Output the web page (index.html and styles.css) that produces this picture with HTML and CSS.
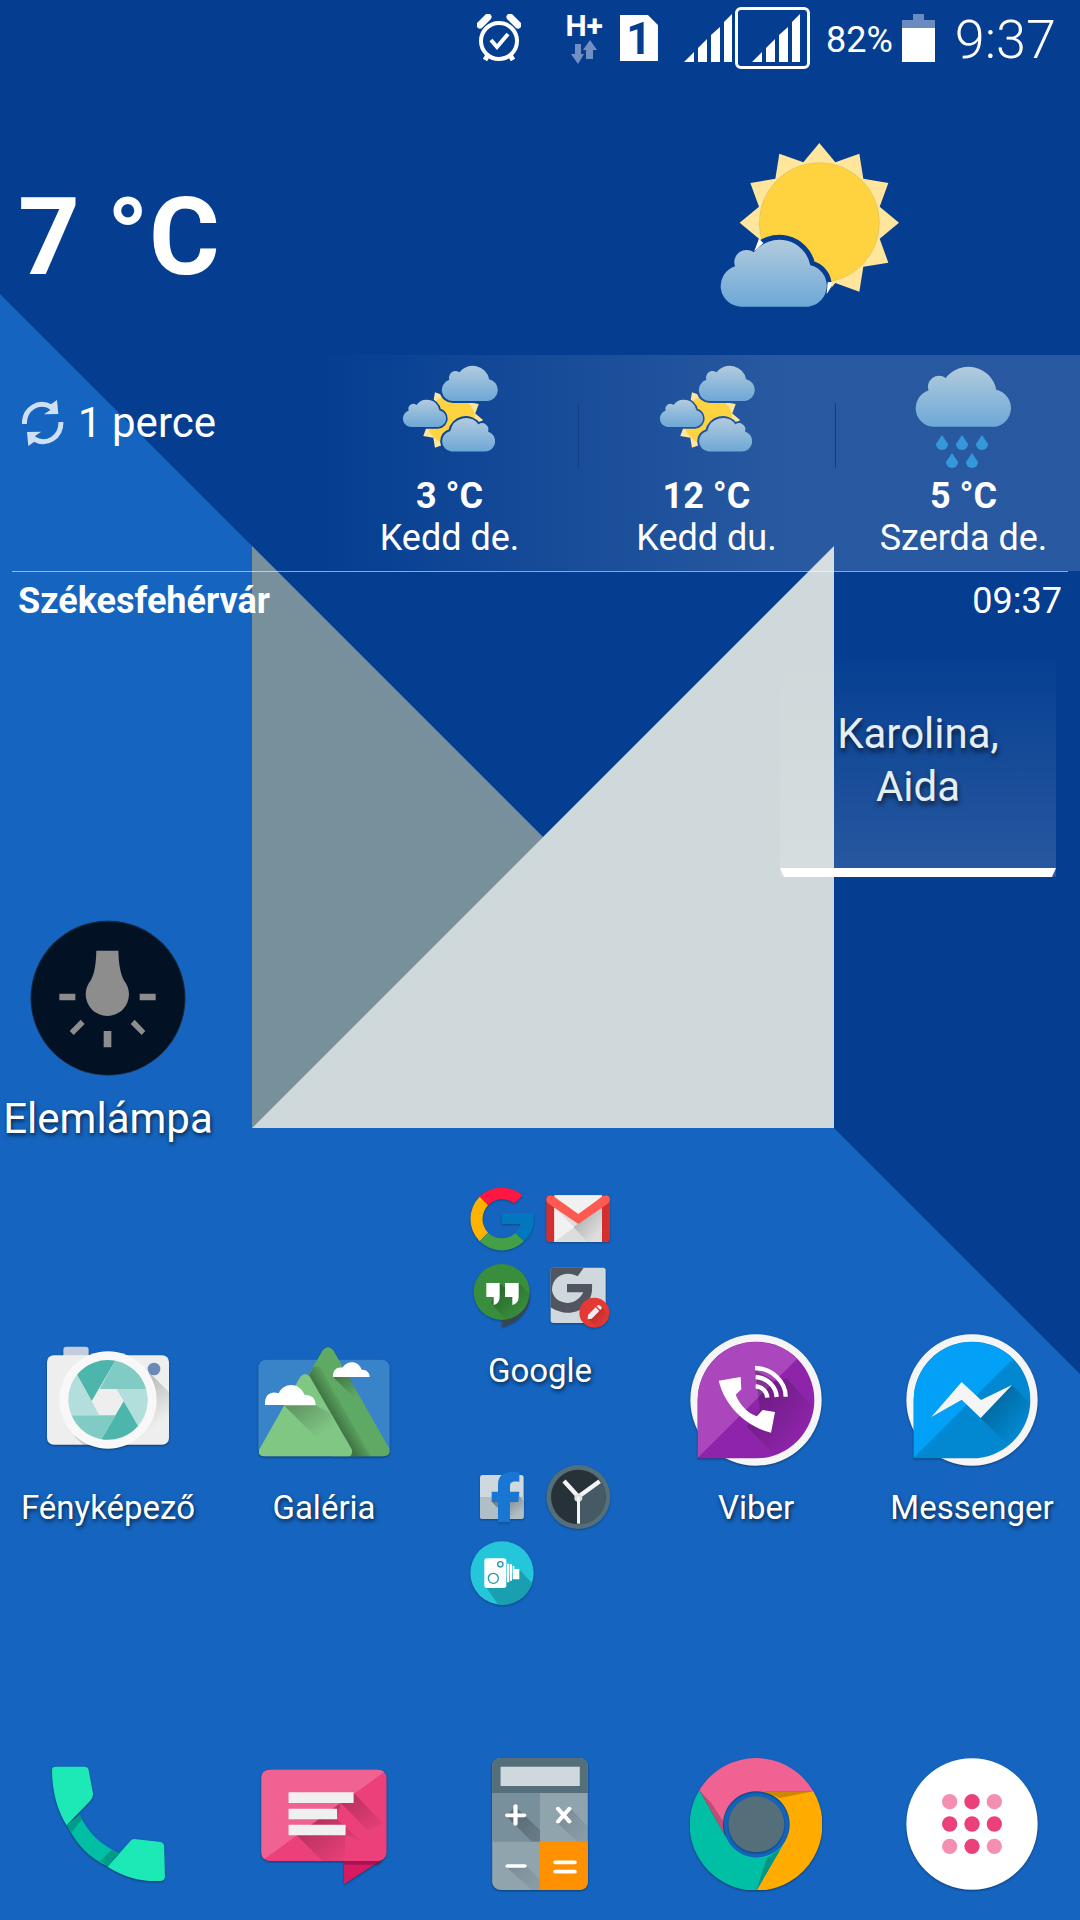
FILE: index.html
```html
<!DOCTYPE html>
<html lang="hu">
<head>
    <meta charset="UTF-8">
    <meta name="viewport" content="width=device-width, initial-scale=1">
    <title>Kezdőképernyő</title>
    <link rel="stylesheet" href="styles.css">
</head>
<body>
    <svg class="wallpaper" viewBox="0 0 1080 1920" preserveAspectRatio="xMidYMid slice" aria-hidden="true">
        <rect width="1080" height="1920" fill="#1565c0"/>
        <path d="M0 0H1080V1374L834 1128L543 837L0 294z" fill="#053e91"/>
        <path d="M252 546L543 837L252 1128z" fill="#78909b"/>
        <path d="M834 546V1128H252z" fill="#cfd8da"/>
    </svg>

    <!-- Shared gradients and weather shapes -->
    <svg class="defs" aria-hidden="true">
        <defs>
            <linearGradient id="cloudFill" x1="0" y1="0" x2="0" y2="1">
                <stop offset="0" stop-color="#b2cbdd"/>
                <stop offset="1" stop-color="#6da8d7"/>
            </linearGradient>
            <linearGradient id="shade" x1="0" y1="0" x2="1" y2="1">
                <stop offset="0.1" stop-color="#000" stop-opacity="0.4"/>
                <stop offset="0.8" stop-color="#000" stop-opacity="0"/>
            </linearGradient>
            <linearGradient id="ridge" gradientUnits="userSpaceOnUse" x1="993" y1="275" x2="1033" y2="252">
                <stop offset="0" stop-color="#000" stop-opacity="0.3"/>
                <stop offset="1" stop-color="#000" stop-opacity="0"/>
            </linearGradient>
            <symbol id="cloud" viewBox="123 362 324 199" overflow="visible">
                <path d="M185 561A62 62 0 0 1 165 440A37 37 0 0 1 222 398A95 95 0 0 1 391 437A63 63 0 0 1 385 561z"/>
            </symbol>
            <g id="sun">
                <path fill="#ffe69c" d="M418 70L466 128L538 102L550 177L625 190L599 261L657 309L599 357L625 429L550 441L538 516L466 490L418 548L370 490L298 516L286 441L211 429L237 357L179 309L237 261L211 190L286 177L298 102L370 128z"/>
                <circle cx="418" cy="309" r="180" fill="#ffd340" stroke="#d9bf63" stroke-width="2"/>
            </g>
            <mask id="bigGap" maskUnits="userSpaceOnUse" x="100" y="50" width="600" height="520">
                <rect x="100" y="50" width="600" height="520" fill="#fff"/>
                <path stroke="#000" stroke-width="30" d="M185 561A62 62 0 0 1 165 440A37 37 0 0 1 222 398A95 95 0 0 1 391 437A63 63 0 0 1 385 561z"/>
            </mask>
            <mask id="smallGap" maskUnits="userSpaceOnUse" x="79" y="24" width="100" height="111">
                <rect x="79" y="24" width="100" height="111" fill="#fff"/>
                <g stroke="#000" stroke-width="24">
                    <use href="#cloud" x="121" y="26" width="57" height="35"/>
                    <use href="#cloud" x="82" y="60" width="44" height="27"/>
                    <use href="#cloud" x="-174" y="78" width="54" height="34" transform="scale(-1 1)"/>
                </g>
            </mask>
            <symbol id="cloudy" viewBox="79 24 100 111">
                <g mask="url(#smallGap)">
                    <use href="#sun" transform="translate(74 38.6) scale(.134)"/>
                </g>
                <g fill="url(#cloudFill)">
                    <use href="#cloud" x="121" y="26" width="57" height="35"/>
                    <use href="#cloud" x="82" y="60" width="44" height="27"/>
                    <use href="#cloud" x="-174" y="78" width="54" height="34" transform="scale(-1 1)"/>
                </g>
            </symbol>
        </defs>
    </svg>

    <main class="home">
        <header class="status-bar">
            <svg class="alarm" width="44" height="48" viewBox="0 0 44 48">
                <g fill="none" stroke="#fff" stroke-width="4">
                    <circle cx="22" cy="27" r="18"/>
                    <path d="M14 26L20 33L31 20"/>
                    <path d="M11 41L8 46M33 41L36 46" stroke-width="5"/>
                    <path d="M3 11L11 3M41 11L33 3" stroke-width="7" stroke-linecap="round"/>
                </g>
            </svg>
            <div class="network">
                <span>H+</span>
                <svg width="28" height="24" viewBox="0 0 28 24" fill="#7090c4">
                    <path d="M5 4H11V14H14L8 24L1 14H5zM16 19V10H13L20 0L27 10H23V19z"/>
                </svg>
            </div>
            <div class="sim">1</div>
            <svg class="signal" width="48" height="48" viewBox="0 0 48 48" fill="#fff">
                <path d="M0 48L10 38V48zM14 48V34L23 25V48zM27 48V21L36 13V48zM40 48V8L48 0V48z"/>
            </svg>
            <div class="signal-box">
                <svg width="48" height="48" viewBox="0 0 48 48" fill="#fff">
                    <path d="M0 48L10 38V48zM14 48V34L23 25V48zM27 48V21L36 13V48zM40 48V8L48 0V48z"/>
                </svg>
            </div>
            <span class="percent">82%</span>
            <svg class="battery" width="33" height="48" viewBox="0 0 33 48">
                <path d="M11 0H22V6H33V15H0V6H11z" fill="#6a8bc0"/>
                <path d="M0 14H33V48H0z" fill="#fff"/>
            </svg>
            <time class="clock">9:37</time>
        </header>

        <section class="weather">
            <div class="current">
                <h1>7 °C</h1>
                <svg width="180" height="165" viewBox="120 70 540 495">
                    <path fill="#fff" d="M237 357L250 370L222 396zM443 488L463 486L440 524z"/>
                    <use href="#sun" mask="url(#bigGap)"/>
                    <use href="#cloud" x="123" y="362" width="324" height="199" fill="url(#cloudFill)"/>
                </svg>
            </div>
            <div class="forecast-row">
                <button class="refresh" type="button">
                    <svg width="42" height="46" viewBox="66 804 126 138">
                        <g id="arrow">
                            <path d="M73 876C73 830 115 803 154 825" fill="none" stroke="#cfdff4" stroke-width="15"/>
                            <path d="M171 804L175 846L132 847L151 834L141 822L153 817z" fill="#cfdff4"/>
                        </g>
                        <use href="#arrow" transform="rotate(180 128 873)"/>
                    </svg>
                    1 perce
                </button>
                <ul class="forecast">
                    <li>
                        <svg width="100" height="111"><use href="#cloudy"/></svg>
                        <strong>3 °C</strong>
                        <span>Kedd de.</span>
                    </li>
                    <li>
                        <svg width="100" height="111"><use href="#cloudy"/></svg>
                        <strong>12 °C</strong>
                        <span>Kedd du.</span>
                    </li>
                    <li>
                        <svg width="100" height="111" viewBox="594 24 100 111">
                            <use href="#cloud" x="596" y="27" width="97" height="60" fill="url(#cloudFill)"/>
                            <g fill="#3498db">
                                <path id="drop" d="M622 95C626 101 628 104 628 104A6 6 0 0 1 616 104C616 104 618 101 622 95z"/>
                                <use href="#drop" x="20"/>
                                <use href="#drop" x="40"/>
                                <use href="#drop" x="10" y="18"/>
                                <use href="#drop" x="30" y="18"/>
                            </g>
                        </svg>
                        <strong>5 °C</strong>
                        <span>Szerda de.</span>
                    </li>
                </ul>
            </div>
            <div class="place">
                <strong>Székesfehérvár</strong>
                <time>09:37</time>
            </div>
        </section>

        <section class="nameday">
            <p>Karolina,<br>Aida</p>
        </section>

        <a class="flashlight" href="#">
            <svg width="156" height="156" viewBox="92 58 468 468">
                <circle cx="326" cy="292" r="232" fill="#021224"/>
                <circle cx="326" cy="293" r="231" fill="none" stroke="#26364a" stroke-width="2"/>
                <g fill="#8d8d8d">
                    <path d="M291 150H357C358 185 362 215 373 238C383 250 389 265 389 281A65 65 0 0 1 259 281C259 265 265 250 275 238C287 215 290 185 291 150z"/>
                    <path d="M180 279H228V299H180zM421 279H469V299H421zM313 391H336V440H313zM244 357L256 370L223 403L211 391zM406 357L394 370L427 403L438 391z"/>
                </g>
            </svg>
            Elemlámpa
        </a>

        <nav class="apps">
            <a class="app" href="#">
                <svg viewBox="126 42 396 396">
                    <rect x="190" y="80" width="76" height="40" rx="9" fill="#c3cddd"/>
                    <rect x="141" y="106" width="366" height="268" rx="20" fill="#eee"/>
                    <path d="M450 160L507 216V354Q507 374 487 374H250L225 350z" fill="url(#shade)"/>
                    <circle cx="462" cy="147" r="19" fill="#6a89b9"/>
                    <circle cx="324" cy="240" r="146" fill="#f8f8f8"/>
                    <circle cx="324" cy="240" r="120" fill="#eee"/>
                    <path d="M231 164A120 120 0 0 1 346 122L275 243z" fill="#4db6ac"/>
                    <path d="M346 122A120 120 0 0 1 438 207H299z" fill="#80cbc4"/>
                    <path d="M438 207A120 120 0 0 1 414 318L350 207z" fill="#b2dfdb"/>
                    <path d="M414 318A120 120 0 0 1 304 358L371 244z" fill="#4db6ac"/>
                    <path d="M304 358A120 120 0 0 1 215 286H348z" fill="#80cbc4"/>
                    <path d="M215 286A120 120 0 0 1 231 164L298 286z" fill="#b2dfdb"/>
                </svg>
                Fényképező
            </a>
            <a class="app" href="#">
                <svg viewBox="774 42 396 396">
                    <rect x="775" y="119" width="394" height="290" rx="24" fill="#3984c8"/>
                    <path d="M966 94Q984 70 1002 94L1168 386Q1174 408 1150 409H1000L900 210z" fill="#5ea963"/>
                    <path d="M927 165L1056 390L1052 409H1112L960 140L940 140z" fill="url(#ridge)"/>
                    <path d="M900 172Q915 152 930 172L1056 390Q1058 408 1045 409H790Q774 408 777 390z" fill="#81c784"/>
                    <path d="M853 257H947L990 280L1000 310L960 364z" fill="url(#shade)" opacity=".6"/>
                    <path d="M999 171H1047L1085 240L1070 240z" fill="url(#shade)" opacity=".7"/>
                    <g fill="#fff">
                        <path d="M795 255V247C796 222 815 212 836 220C850 187 897 184 914 225C936 224 947 237 947 255z"/>
                        <path d="M999 171C998 150 1010 140 1027 143C1040 120 1076 120 1085 149C1100 148 1109 158 1109 171z"/>
                    </g>
                </svg>
                Galéria
            </a>
            <div class="folders">
                <a class="folder" href="#">
                    <span class="minis">
                        <svg viewBox="87 51 192 192">
                            <path d="M116 80A95 95 0 0 1 245 76L220 100A59 59 0 0 0 141 106z" fill="#ff1744"/>
                            <path d="M116 214A95 95 0 0 1 116 80L141 106A59 59 0 0 0 141 188z" fill="#ffb300"/>
                            <path d="M249 214A95 95 0 0 1 116 214L141 188A59 59 0 0 0 224 188z" fill="#43a047"/>
                            <path d="M182 129H277A95 95 0 0 1 249 214L221 188A59 59 0 0 0 239 162H182z" fill="#0277bd"/>
                        </svg>
                        <svg viewBox="315 51 192 192">
                            <rect x="316" y="76" width="191" height="140" rx="9" fill="#d32f2f"/>
                            <path d="M340 76H483V216H340z" fill="#ddd"/>
                            <path d="M340 76H483L412 150zM340 112L400 172L340 216z" fill="#f1f1f1"/>
                            <path d="M412 160L483 110V216H440L398 172z" fill="url(#shade)" opacity=".6"/>
                            <path d="M316 86Q322 72 336 78L412 132L486 78Q504 72 507 88Q507 96 500 101L412 162L323 101Q315 94 316 86z" fill="#ff5a52"/>
                        </svg>
                        <svg viewBox="87 279 192 192">
                            <path d="M183 440V472C240 455 270 410 267 370z" fill="#37474f"/>
                            <circle cx="182" cy="366" r="84" fill="#388e3c"/>
                            <path d="M175 340L190 352L234 340L266 372A84 84 0 0 1 195 449L150 400z" fill="url(#shade)" opacity=".7"/>
                            <path d="M136 339H176V380Q176 400 158 405V381H136zM192 339H233V380Q233 400 214 405V381H192z" fill="#fff"/>
                        </svg>
                        <svg viewBox="315 279 192 192">
                            <rect x="329" y="293" width="165" height="166" rx="8" fill="#cfd8dc"/>
                            <path d="M337 293H428L410 319C380 300 334 315 333 358C335 402 402 418 427 367H378V342H453C460 420 385 450 329 412V301Q329 293 337 293z" fill="#50555f"/>
                            <circle cx="460" cy="428" r="45" fill="#e53935"/>
                            <path d="M482 412L504 434A45 45 0 0 1 465 472L442 447z" fill="url(#shade)" opacity=".6"/>
                            <path d="M441 435L464 412L475 423L452 446L440 448zM467 409L471 405Q475 404 482 411Q484 415 478 420z" fill="#eee"/>
                        </svg>
                    </span>
                    Google
                </a>
                <a class="folder" href="#" aria-label="Mappa">
                    <span class="minis">
                        <svg viewBox="87 75 192 192">
                            <rect x="117" y="105" width="131" height="132" rx="8" fill="#cfd8dc"/>
                            <path d="M117 171H248V229Q248 237 240 237H125Q117 237 117 229z" fill="#b0bec5"/>
                            <path d="M153 186L171 205V237L207 237H240L248 229V185L236 168L207 186z" fill="url(#shade)"/>
                            <path d="M171 247V186H152V155H171V135C171 104 190 92 235 96V125C213 123 207 126 207 140V155H235L232 186H207V247z" fill="#1976d2"/>
                        </svg>
                        <svg viewBox="315 75 192 192">
                            <circle cx="412" cy="171" r="96" fill="#546e7a"/>
                            <circle cx="412" cy="171" r="82" fill="#263238"/>
                            <path d="M412 171L480 125A82 82 0 0 1 412 253z" fill="#455a64"/>
                            <path d="M412 170L369 123M412 170L476 124" stroke="#f5f5f5" stroke-width="13"/>
                            <circle cx="412" cy="173" r="12" fill="#e0e0e0"/>
                            <path d="M408 170H417V251H408z" fill="#f5f5f5"/>
                        </svg>
                        <svg viewBox="87 303 192 192">
                            <circle cx="183" cy="399" r="95" fill="#26c6da"/>
                            <path d="M236 389L274 430A95 95 0 0 1 172 494L134 440z" fill="#1a9fb0"/>
                            <g fill="#fff">
                                <rect x="130" y="355" width="66" height="89" rx="8"/>
                                <path d="M198 371H205V427H198zM207 373H213V422H207zM215 378H220V418H215zM220 387H235V418H220z"/>
                            </g>
                            <g fill="none" stroke="#2196a8" stroke-width="4">
                                <circle cx="157" cy="415" r="15"/>
                                <circle cx="178" cy="373" r="8"/>
                            </g>
                        </svg>
                    </span>
                </a>
            </div>
            <a class="app" href="#">
                <svg viewBox="90 72 396 396">
                    <circle cx="288" cy="270" r="197" fill="#f5f5f5"/>
                    <path d="M113 443V270A175 175 0 1 1 288 445H113z" fill="#8e24aa"/>
                    <path d="M113 443V270A175 175 0 0 1 411 147z" fill="#ab47bc"/>
                    <path d="M285 180L350 215L380 205L462 295A175 175 0 0 1 345 435L260 350L300 300z" fill="url(#shade)" opacity=".7"/>
                    <path d="M176 212L242 201L244 238L227 254C240 285 262 308 290 319L308 300L345 306L333 368C260 350 195 290 176 212z" fill="#fff"/>
                    <g fill="none" stroke="#fff" stroke-width="13">
                        <path d="M285 174C335 174 377 215 377 260"/>
                        <path d="M287 201C322 203 348 230 350 261"/>
                        <path d="M287 229C306 230 321 244 322 263"/>
                    </g>
                </svg>
                Viber
            </a>
            <a class="app" href="#">
                <svg viewBox="738 72 396 396">
                    <circle cx="936" cy="270" r="197" fill="#f5f5f5"/>
                    <path d="M761 443V270A175 175 0 1 1 936 445H761z" fill="#0288d1"/>
                    <path d="M761 443V270A175 175 0 0 1 1059 147z" fill="#03a0f7"/>
                    <path d="M1056 225L1110 280A175 175 0 0 1 1040 402L962 324z" fill="url(#shade)" opacity=".7"/>
                    <path d="M814 321L905 216L963 270L1056 225L962 324L905 269z" fill="#f5f5f5"/>
                </svg>
                Messenger
            </a>
        </nav>

        <nav class="dock">
            <a href="#" aria-label="Telefon">
                <svg viewBox="42 28 132 132">
                    <g transform="scale(.3827 .3333)">
                        <path d="M175 285L209 254C230 310 265 345 311 369L281 409C235 385 200 345 175 285z" fill="#00bfa5"/>
                        <path d="M175 285L209 254L215 268L186 308zM311 369L281 409L262 392L292 360z" fill="#00796b" opacity=".5"/>
                        <path d="M136 120Q136 110 146 110H220Q231 110 232 122L243 190Q244 202 236 212L174 286Q136 215 136 120z" fill="#1de9b6"/>
                        <path d="M281 410L340 334Q346 325 356 328L415 335Q429 337 429 350L431 440Q431 452 418 453Q345 457 281 410z" fill="#1de9b6"/>
                    </g>
                </svg>
            </a>
            <a href="#" aria-label="Üzenetek">
                <svg viewBox="258 28 132 132">
                    <g transform="scale(.3827 .3333)">
                        <path d="M899 385H1003L899 463z" fill="#d81b60"/>
                        <path d="M899 393H1000L988 404H899z" fill="#880e4f" opacity=".6"/>
                        <rect x="683" y="119" width="327" height="274" rx="24" fill="#ec407a"/>
                        <path d="M690 388Q683 380 683 369V143Q683 119 707 119H986Q998 119 1004 126z" fill="#f06292"/>
                        <path d="M924 188L1000 280L960 300L890 218L881 268L940 330L903 316L900 393H842L776 316z" fill="url(#shade)" opacity=".8"/>
                        <path d="M754 187H924V219H754zM754 236H881V268H754zM754 284H903V316H754z" fill="#f0f0f0"/>
                    </g>
                </svg>
            </a>
            <a href="#" aria-label="Számológép">
                <svg viewBox="474 28 132 132">
                    <g transform="scale(.3827 .3333)">
                        <rect x="1286" y="84" width="250" height="396" rx="24" fill="#90a4ae"/>
                        <path d="M1286 189V108Q1286 84 1310 84H1512Q1536 84 1536 108V189z" fill="#546e7a"/>
                        <path d="M1286 189H1411V335H1286z" fill="#78909c"/>
                        <path d="M1411 335H1536V456Q1536 480 1512 480H1411z" fill="#ff9100"/>
                        <path d="M1308 110H1515V168H1308z" fill="#cfd8dc"/>
                        <path d="M1347 230L1411 300V335H1390L1322 258zM1490 235L1536 290V335H1510L1455 278zM1376 408L1411 450V480H1390L1322 410zM1507 392L1536 425V480H1500L1448 428z" fill="url(#shade)" opacity=".6"/>
                        <path d="M1347 228V282M1325 256H1370M1458 236L1488 275M1488 236L1458 275M1326 408H1371M1451 397H1502M1451 425H1502" stroke="#fff" stroke-width="11" stroke-linecap="round"/>
                    </g>
                </svg>
            </a>
            <a href="#" aria-label="Chrome">
                <svg viewBox="270 84 396 396">
                    <path d="M298 181A198 198 0 0 1 640 184H469A99 99 0 0 0 376 320z" fill="#f06292"/>
                    <path d="M640 184A198 198 0 0 1 469 482L556 332A99 99 0 0 0 469 184z" fill="#ffab00"/>
                    <path d="M469 482A198 198 0 0 1 298 181L380 325A99 99 0 0 0 540 353L556 332z" fill="#00bfa5"/>
                    <path d="M298 181L376 320L370 275L335 220zM640 184H490L540 204zM469 482L540 358L500 385z" fill="#000" opacity=".2"/>
                    <circle cx="469" cy="283" r="84" fill="#546e7a"/>
                </svg>
            </a>
            <button type="button" aria-label="Alkalmazások">
                <svg viewBox="918 84 396 396">
                    <circle cx="1116" cy="282" r="197" fill="#fff"/>
                    <g fill="#f48fb1">
                        <circle cx="1049" cy="215" r="23"/>
                        <circle cx="1183" cy="215" r="23"/>
                        <circle cx="1049" cy="349" r="23"/>
                        <circle cx="1183" cy="349" r="23"/>
                    </g>
                    <g fill="#ec407a">
                        <circle cx="1116" cy="215" r="23"/>
                        <circle cx="1049" cy="282" r="23"/>
                        <circle cx="1116" cy="282" r="23"/>
                        <circle cx="1183" cy="282" r="23"/>
                        <circle cx="1116" cy="349" r="23"/>
                    </g>
                </svg>
            </button>
        </nav>
    </main>
</body>
</html>
```
FILE: styles.css
```css
* {
    box-sizing: border-box;
}
body {
    margin: 0;
    background: #1565c0;
    color: #fff;
    font-family: Roboto, "Noto Sans", sans-serif;
    overflow-x: hidden;
}
a {
    color: inherit;
    text-decoration: none;
}
button {
    margin: 0;
    padding: 0;
    border: none;
    background: none;
    color: inherit;
    font: inherit;
    cursor: pointer;
}
svg {
    display: block;
}
.defs {
    position: absolute;
    width: 0;
    height: 0;
}
.wallpaper {
    position: absolute;
    top: 0;
    left: 0;
    width: 100%;
    height: 100%;
    z-index: -1;
}
.home {
    display: flex;
    flex-direction: column;
    min-height: 100vh;
    overflow: hidden;
}

/* status bar */
.status-bar {
    display: flex;
    justify-content: flex-end;
    align-items: center;
    height: 76px;
    padding-right: 24px;
}
.alarm {
    margin-right: 44px;
}
.network {
    display: flex;
    flex-direction: column;
    align-items: center;
    margin-right: 17px;
    font-size: 30px;
    font-weight: bold;
    line-height: 28px;
}
.sim {
    width: 38px;
    height: 46px;
    margin-right: 26px;
    background: #fff;
    clip-path: polygon(0 0, 28px 0, 100% 10px, 100% 100%, 0 100%);
    color: #053e91;
    font-size: 44px;
    font-weight: bold;
    line-height: 48px;
    text-align: center;
}
.signal {
    margin-right: 3px;
}
.signal-box {
    display: flex;
    padding: 4px 7px 4px 14px;
    border: 3px solid #fff;
    border-radius: 6px;
    margin-right: 16px;
}
.percent {
    margin-right: 9px;
    font-size: 36px;
    line-height: 42px;
    padding-top: 3px;
}
.battery {
    margin-right: 20px;
}
.clock {
    font-size: 54px;
    font-weight: 300;
    line-height: 64px;
    padding-top: 3px;
}

/* weather widget */
.current {
    display: grid;
    grid-template-columns: 1fr 1fr;
    height: 279px;
    padding-top: 67px;
}
.current h1 {
    margin: 0;
    padding-left: 18px;
    font-size: 108px;
    line-height: 188px;
}
.current svg {
    justify-self: center;
}
.forecast-row {
    display: flex;
    height: 216px;
}
.refresh {
    display: flex;
    align-items: center;
    align-self: flex-start;
    gap: 14px;
    width: 321px;
    padding: 43px 0 0 22px;
    font-size: 42px;
    line-height: 50px;
}
.forecast {
    display: grid;
    grid-template-columns: repeat(3, 1fr);
    flex: 1;
    margin: 0 -12px 0 0;
    padding: 9px 0 0;
    background: linear-gradient(to right, rgba(255, 255, 255, 0), rgba(255, 255, 255, 0.14) 60%);
    list-style: none;
    font-size: 36px;
    line-height: 42px;
}
.forecast li {
    display: flex;
    flex-direction: column;
    align-items: center;
    background: linear-gradient(#123f80, #123f80) left 39px / 1px 65px no-repeat;
}
.forecast li:first-child {
    background: none;
}
.place {
    display: flex;
    justify-content: space-between;
    margin: 0 12px;
    padding: 8px 6px 0;
    border-top: 1px solid rgba(255, 255, 255, 0.55);
    font-size: 36px;
    line-height: 42px;
}

/* name day widget */
.nameday {
    align-self: flex-end;
    width: 276px;
    margin: 28px 24px 0 0;
    padding-top: 57px;
    background: linear-gradient(rgba(255, 255, 255, 0), rgba(255, 255, 255, 0.14));
    color: #e4eef4;
    font-size: 42px;
    line-height: 53px;
    text-align: center;
    text-shadow: 1px 4px 5px rgba(0, 0, 0, 0.6);
}
.nameday p {
    margin: 0;
}
.nameday::after {
    content: "";
    display: block;
    height: 9px;
    margin-top: 55px;
    background: #fff;
    clip-path: polygon(0 0, 100% 0, calc(100% - 4px) 100%, 4px 100%);
}

/* launcher icons */
.flashlight {
    display: flex;
    flex-direction: column;
    align-items: center;
    gap: 18px;
    width: 20%;
    margin-top: 43px;
    font-size: 42px;
    line-height: 50px;
    text-shadow: 1px 2px 4px rgba(0, 0, 0, 0.7);
}
.apps {
    display: grid;
    grid-template-columns: repeat(5, 1fr);
    align-items: center;
    margin-top: 43px;
    font-size: 33px;
    line-height: 39px;
    text-shadow: 1px 2px 4px rgba(0, 0, 0, 0.7);
}
.app,
.folder {
    display: flex;
    flex-direction: column;
    align-items: center;
    gap: 22px;
}
.folder {
    gap: 24px;
}
.app svg,
.dock svg {
    width: 132px;
    height: 132px;
    filter: drop-shadow(0 1px 1px rgba(0, 0, 0, 0.4));
}
.folders {
    display: flex;
    flex-direction: column;
    gap: 75px;
    padding-bottom: 69px;
}
.minis {
    display: grid;
    grid-template-columns: 64px 64px;
    gap: 12px;
}
.minis svg {
    width: 64px;
    height: 64px;
    overflow: visible;
    filter: drop-shadow(0 1px 1px rgba(0, 0, 0, 0.3));
}
.dock {
    display: grid;
    grid-template-columns: repeat(5, 1fr);
    justify-items: center;
    margin-top: auto;
    padding-bottom: 30px;
}
```
